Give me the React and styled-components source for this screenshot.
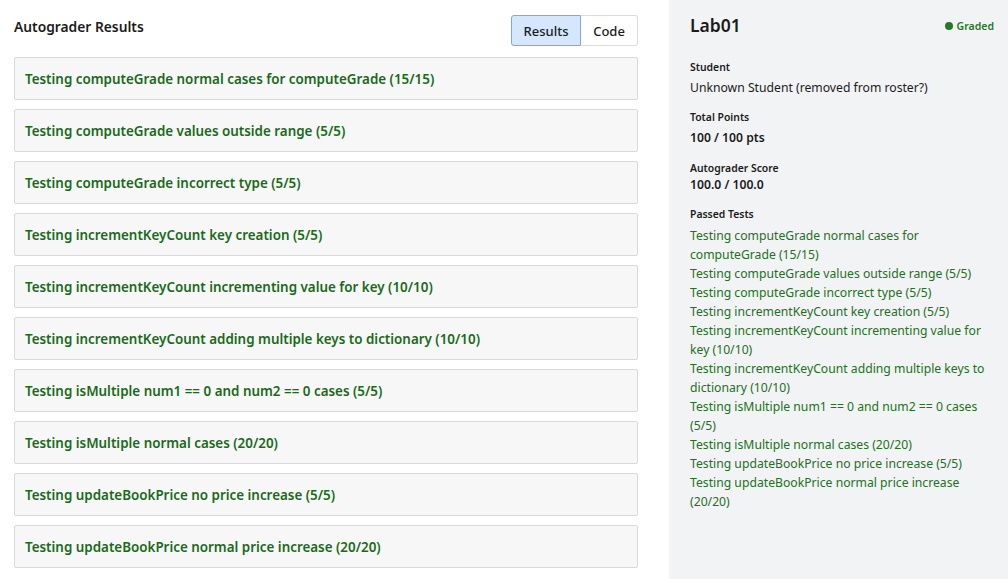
import React from "react";
import styled, { createGlobalStyle } from "styled-components";

const tests = [
	"Testing computeGrade normal cases for computeGrade (15/15)",
	"Testing computeGrade values outside range (5/5)",
	"Testing computeGrade incorrect type (5/5)",
	"Testing incrementKeyCount key creation (5/5)",
	"Testing incrementKeyCount incrementing value for key (10/10)",
	"Testing incrementKeyCount adding multiple keys to dictionary (10/10)",
	"Testing isMultiple num1 == 0 and num2 == 0 cases (5/5)",
	"Testing isMultiple normal cases (20/20)",
	"Testing updateBookPrice no price increase (5/5)",
	"Testing updateBookPrice normal price increase (20/20)",
];

const App = () => {
	return (
		<>
			<GlobalStyle />
			<Page>
				<Main>
					<Header>
						<Title>Autograder Results</Title>
						<Toggle>
							<ToggleButton $active>Results</ToggleButton>
							<ToggleButton>Code</ToggleButton>
						</Toggle>
					</Header>
					<TestList>
						{tests.map((t) => (
							<TestCard key={t}>{t}</TestCard>
						))}
					</TestList>
				</Main>

				<Sidebar>
					<SideHeader>
						<h1>Lab01</h1>
						<Status>
							<span className="dot" />
							Graded
						</Status>
					</SideHeader>

					<Field $mb={13}>
						<Label>Student</Label>
						<Value>Unknown Student (removed from roster?)</Value>
					</Field>
					<Field $mb={14}>
						<Label>Total Points</Label>
						<Value $bold>100 / 100 pts</Value>
					</Field>
					<Field $mb={14}>
						<Label $gap={1}>Autograder Score</Label>
						<Value $bold $tight>
							100.0 / 100.0
						</Value>
					</Field>
					<Field>
						<Label>Passed Tests</Label>
						<PassedList>
							{tests.map((t) => (
								<li key={t}>{t}</li>
							))}
						</PassedList>
					</Field>
				</Sidebar>
			</Page>
		</>
	);
};

const GlobalStyle = createGlobalStyle`
	body {
		margin: 0;
		font-family: "Noto Sans", "Open Sans", sans-serif;
		color: #1b1b1b;
		background: white;
	}
`;

const Page = styled.div`
	display: flex;
	height: 579px;
	overflow: hidden;
`;

const Main = styled.div`
	width: 669px;
	flex-shrink: 0;
	box-sizing: border-box;
	padding: 15px 31px 0 14px;
`;

const Header = styled.div`
	display: flex;
	justify-content: space-between;
	align-items: flex-start;
	height: 42px;
`;

const Title = styled.h2`
	margin: 2px 0 0;
	font-size: 13.8px;
	font-weight: 600;
	line-height: 20px;
`;

const Toggle = styled.div`
	display: flex;
`;

const ToggleButton = styled.div`
	box-sizing: border-box;
	height: 31px;
	display: flex;
	align-items: center;
	justify-content: center;
	font-size: 13px;
	font-weight: 500;
	width: ${(p) => (p.$active ? "70px" : "57px")};
	background: ${(p) => (p.$active ? "#d4e7fc" : "white")};
	border: 1px solid ${(p) => (p.$active ? "#7aa9e6" : "#dcdcdc")};
	border-radius: ${(p) => (p.$active ? "3px 0 0 3px" : "0 3px 3px 0")};
	${(p) => !p.$active && "border-left: none;"}
`;

const TestList = styled.div`
	display: flex;
	flex-direction: column;
	gap: 9px;
`;

const TestCard = styled.div`
	box-sizing: border-box;
	height: 43px;
	display: flex;
	align-items: center;
	padding: 0 10px;
	background: #f7f7f7;
	border: 1px solid #d9d9d9;
	border-radius: 2px;
	color: #196a19;
	font-size: 13.4px;
	font-weight: 600;
`;

const Sidebar = styled.div`
	flex: 1;
	background: #f2f3f5;
	padding: 12px 14px 0 21px;
`;

const SideHeader = styled.div`
	display: flex;
	justify-content: space-between;
	align-items: center;
	margin-bottom: 21px;

	h1 {
		margin: 0;
		font-size: 17.5px;
		font-weight: 600;
		line-height: 27px;
	}
`;

const Status = styled.div`
	display: flex;
	align-items: center;
	gap: 4px;
	color: #237a23;
	font-size: 10.5px;
	font-weight: 600;

	.dot {
		width: 8px;
		height: 8px;
		border-radius: 50%;
		background: #237a23;
	}
`;

const Field = styled.div`
	margin-bottom: ${(p) => p.$mb || 0}px;
`;

const Label = styled.div`
	font-size: 10.4px;
	font-weight: 600;
	line-height: 15px;
	margin-bottom: ${(p) => (p.$gap !== undefined ? p.$gap : 4)}px;
`;

const Value = styled.div`
	font-size: 12.2px;
	line-height: ${(p) => (p.$tight ? "16px" : "18px")};
	font-weight: ${(p) => (p.$bold ? 600 : 400)};
`;

const PassedList = styled.ul`
	list-style: none;
	margin: 0;
	padding: 0;
	width: 300px;

	li {
		color: #237023;
		font-size: 12.2px;
		line-height: 19px;
	}
`;

export default App;
